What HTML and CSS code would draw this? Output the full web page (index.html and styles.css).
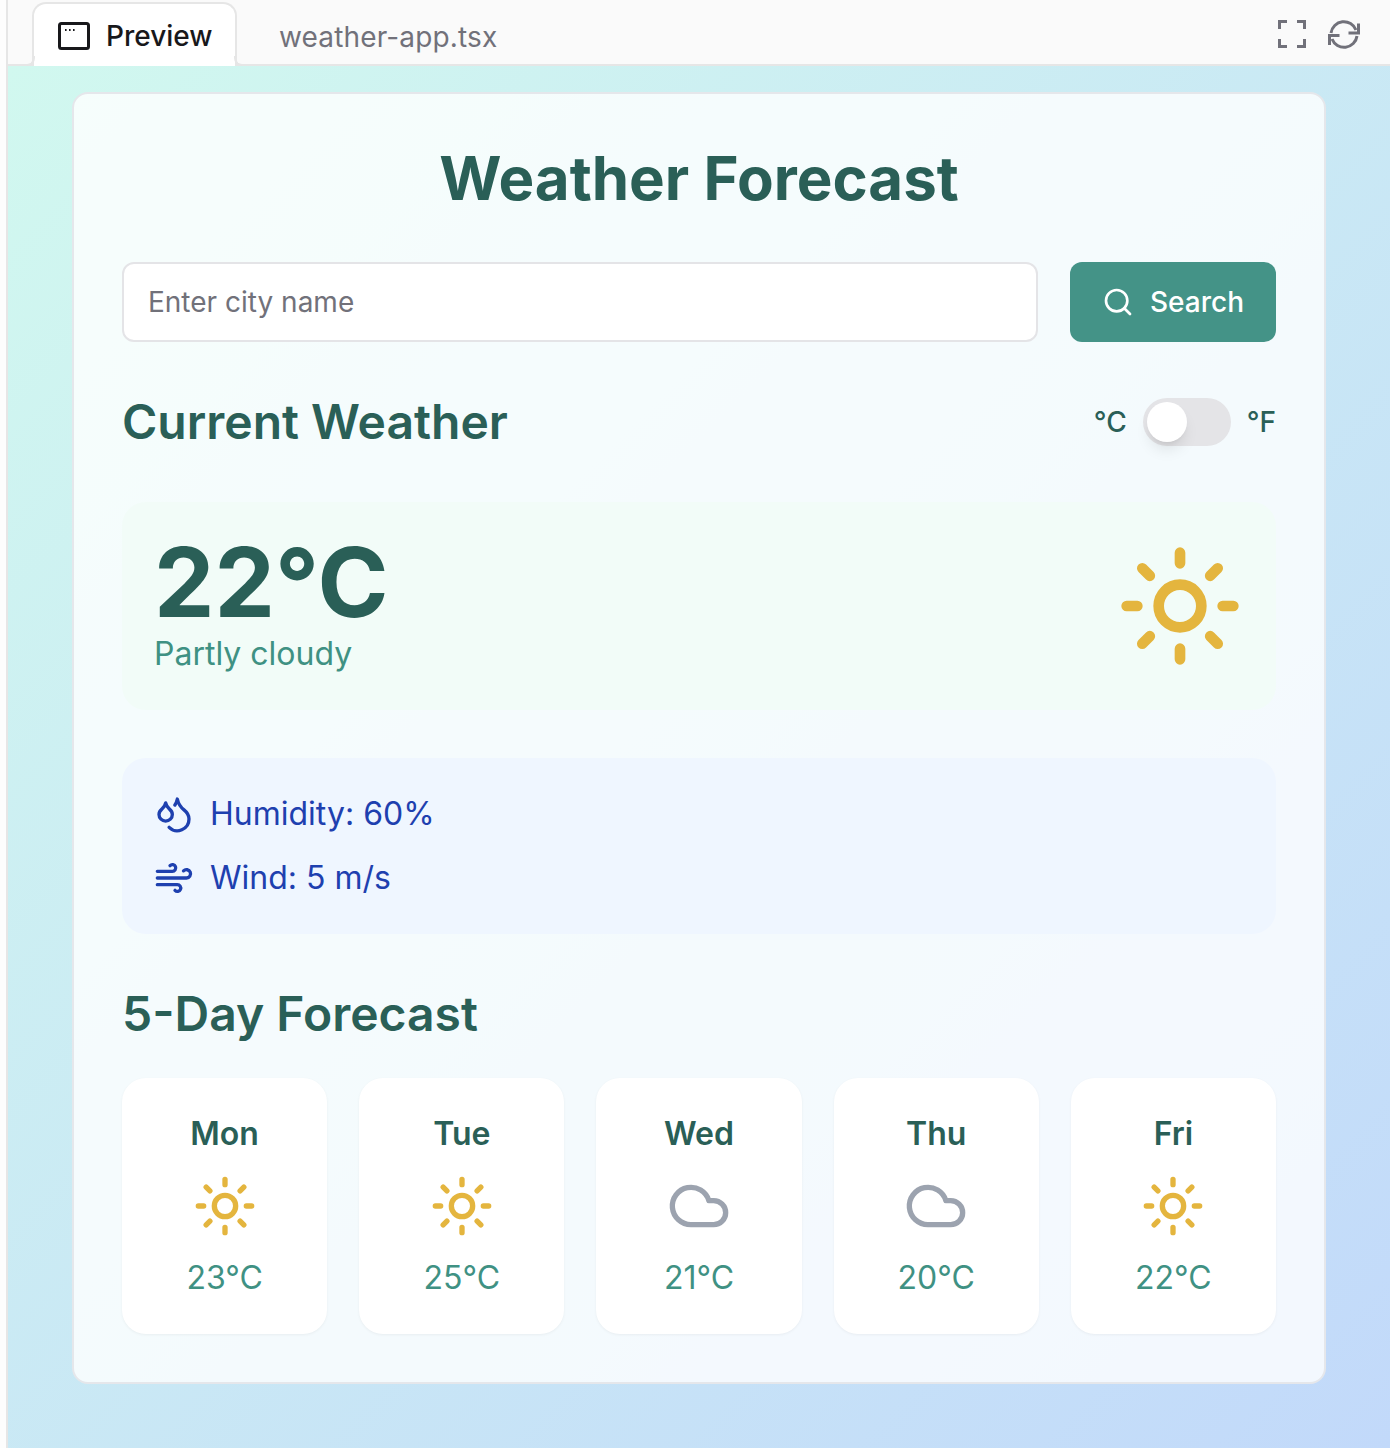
FILE: index.html
```html
<!DOCTYPE html>
<html lang="en">
<head>
    <meta charset="UTF-8">
    <meta name="viewport" content="width=device-width, initial-scale=1.0">
    <title>Weather Forecast</title>
    <link rel="stylesheet" href="styles.css">
</head>
<body>

<div class="topbar">
    <div class="tab tab-active">
        <svg class="tab-icon" viewBox="0 0 32 28" fill="none" stroke="currentColor" stroke-width="3">
            <rect x="1.5" y="1.5" width="29" height="25" rx="2"/>
            <path d="M7 8h1.6M11 8h1.6M15 8h1.6" stroke-width="2"/>
        </svg>
        <span>Preview</span>
    </div>
    <div class="tab">weather-app.tsx</div>
    <div class="tools">
        <svg class="tool-expand" viewBox="0 0 28 28" fill="none" stroke="currentColor" stroke-width="3">
            <path d="M1.5 9V1.5H9M19 1.5h7.5V9M26.5 19v7.5H19M9 26.5H1.5V19"/>
        </svg>
        <svg class="tool-refresh" viewBox="0 0 32 32" fill="none" stroke="currentColor" stroke-width="3">
            <path d="M3 15A13 13 0 0 1 28 12"/>
            <path d="M30.5 5.5v9.500h-10"/>
            <path d="M29 18A13 13 0 0 1 4 21"/>
            <path d="M1.500 27v-9.500h10"/>
        </svg>
    </div>
</div>

<main class="stage">
    <section class="card">
        <h1>Weather Forecast</h1>

        <div class="search-row">
            <input class="city-input" type="text" placeholder="Enter city name">
            <button class="search-btn">
                <svg viewBox="0 0 24 24" fill="none" stroke="currentColor" stroke-width="2" stroke-linecap="round" stroke-linejoin="round">
                    <circle cx="11" cy="11" r="8"/>
                    <path d="m21 21-4.300-4.300"/>
                </svg>
                Search
            </button>
        </div>

        <div class="current-head">
            <h2>Current Weather</h2>
            <div class="unit-toggle">
                <span>°C</span>
                <div class="switch"><div class="knob"></div></div>
                <span>°F</span>
            </div>
        </div>

        <div class="current-panel">
            <div>
                <div class="temp">22°C</div>
                <div class="condition">Partly cloudy</div>
            </div>
            <svg class="sun sun-large" viewBox="0 0 24 24" fill="none" stroke="currentColor" stroke-width="2" stroke-linecap="round" stroke-linejoin="round">
                <circle cx="12" cy="12" r="4"/>
                <path d="M12 2v2M12 20v2m-7.070-17.070 1.410 1.410m11.320 11.320 1.410 1.410M2 12h2m16 0h2M6.340 17.660l-1.410 1.410M19.070 4.930l-1.410 1.410"/>
            </svg>
        </div>

        <div class="details-panel">
            <div class="detail">
                <svg viewBox="0 0 24 24" fill="none" stroke="currentColor" stroke-width="2" stroke-linecap="round" stroke-linejoin="round">
                    <path d="M7 16.300c2.200 0 4-1.830 4-4.050 0-1.160-.570-2.260-1.710-3.190S7.290 6.750 7 5.300c-.290 1.450-1.140 2.840-2.290 3.760S3 11.100 3 12.250c0 2.220 1.800 4.050 4 4.050z"/>
                    <path d="M12.560 6.600A10.970 10.970 0 0 0 14 3.020c.5 2.500 2 4.900 4 6.500s3 3.500 3 5.500a6.980 6.980 0 0 1-11.910 4.970"/>
                </svg>
                <span>Humidity: 60%</span>
            </div>
            <div class="detail">
                <svg viewBox="0 0 24 24" fill="none" stroke="currentColor" stroke-width="2" stroke-linecap="round" stroke-linejoin="round">
                    <path d="M17.700 7.700a2.500 2.500 0 1 1 1.800 4.300H2"/>
                    <path d="M9.600 4.600A2 2 0 1 1 11 8H2"/>
                    <path d="M12.600 19.400A2 2 0 1 0 14 16H2"/>
                </svg>
                <span>Wind: 5 m/s</span>
            </div>
        </div>

        <h2 class="forecast-title">5-Day Forecast</h2>

        <div class="forecast-grid">
            <div class="day">
                <div class="day-name">Mon</div>
                <svg class="sun" viewBox="0 0 24 24" fill="none" stroke="currentColor" stroke-width="2" stroke-linecap="round" stroke-linejoin="round">
                    <circle cx="12" cy="12" r="4"/>
                    <path d="M12 2v2M12 20v2m-7.070-17.070 1.410 1.410m11.320 11.320 1.410 1.410M2 12h2m16 0h2M6.340 17.660l-1.410 1.410M19.070 4.930l-1.410 1.410"/>
                </svg>
                <div class="day-temp">23°C</div>
            </div>
            <div class="day">
                <div class="day-name">Tue</div>
                <svg class="sun" viewBox="0 0 24 24" fill="none" stroke="currentColor" stroke-width="2" stroke-linecap="round" stroke-linejoin="round">
                    <circle cx="12" cy="12" r="4"/>
                    <path d="M12 2v2M12 20v2m-7.070-17.070 1.410 1.410m11.320 11.320 1.410 1.410M2 12h2m16 0h2M6.340 17.660l-1.410 1.410M19.070 4.930l-1.410 1.410"/>
                </svg>
                <div class="day-temp">25°C</div>
            </div>
            <div class="day">
                <div class="day-name">Wed</div>
                <svg class="cloud" viewBox="0 0 24 24" fill="none" stroke="currentColor" stroke-width="2" stroke-linecap="round" stroke-linejoin="round">
                    <path d="M17.500 19H9a7 7 0 1 1 6.710-9h1.790a4.500 4.500 0 1 1 0 9Z"/>
                </svg>
                <div class="day-temp">21°C</div>
            </div>
            <div class="day">
                <div class="day-name">Thu</div>
                <svg class="cloud" viewBox="0 0 24 24" fill="none" stroke="currentColor" stroke-width="2" stroke-linecap="round" stroke-linejoin="round">
                    <path d="M17.500 19H9a7 7 0 1 1 6.710-9h1.790a4.500 4.500 0 1 1 0 9Z"/>
                </svg>
                <div class="day-temp">20°C</div>
            </div>
            <div class="day">
                <div class="day-name">Fri</div>
                <svg class="sun" viewBox="0 0 24 24" fill="none" stroke="currentColor" stroke-width="2" stroke-linecap="round" stroke-linejoin="round">
                    <circle cx="12" cy="12" r="4"/>
                    <path d="M12 2v2M12 20v2m-7.070-17.070 1.410 1.410m11.320 11.320 1.410 1.410M2 12h2m16 0h2M6.340 17.660l-1.410 1.410M19.070 4.930l-1.410 1.410"/>
                </svg>
                <div class="day-temp">22°C</div>
            </div>
        </div>
    </section>
</main>

</body>
</html>
```

FILE: styles.css
```css
* {
    box-sizing: border-box;
}

body {
    margin: 0;
    height: 1448px;
    overflow: hidden;
    font-family: Inter, "Liberation Sans", sans-serif;
    background-color: #fdfdfd;
    padding-left: 6px;
    color: #2a5f57;
}

.topbar {
    display: flex;
    align-items: flex-end;
    height: 66px;
    padding-left: 24px;
    background-color: #fafafa;
    border-left: 2px solid #e6e6e6;
    border-bottom: 2px solid #e6e6e6;
}

.tab {
    display: flex;
    align-items: center;
    height: 64px;
    font-size: 28px;
    letter-spacing: 0.15px;
    color: #71717a;
    padding: 6px 42px 0 42px;
    margin-bottom: -2px;
}

.tab-active {
    position: relative;
    width: 205px;
    height: 64px;
    padding: 2px 0 0 24px;
    gap: 16px;
    letter-spacing: 0;
    color: #18181b;
    font-weight: 500;
    background-color: #fff;
    border: 2px solid #e6e6e6;
    border-bottom: none;
    border-radius: 14px 14px 0 0;
}

/* little flares where the tab meets the bar line */
.tab-active::before,
.tab-active::after {
    content: "";
    position: absolute;
    bottom: 0;
    width: 8px;
    height: 8px;
    border-bottom: 2px solid #e6e6e6;
}

.tab-active::before {
    left: -9px;
    border-right: 2px solid #e6e6e6;
    border-bottom-right-radius: 8px;
}

.tab-active::after {
    right: -9px;
    border-left: 2px solid #e6e6e6;
    border-bottom-left-radius: 8px;
}

.tab-icon {
    width: 32px;
    height: 28px;
}

.tools {
    display: flex;
    align-items: center;
    gap: 22px;
    margin-left: auto;
    margin-right: 30px;
    height: 64px;
    padding-top: 4px;
    color: #71717a;
}

.tool-expand {
    width: 28px;
    height: 28px;
}

.tool-refresh {
    width: 32px;
    height: 32px;
}

.stage {
    height: 1382px;
    padding: 26px 64px 0 64px;
    border-left: 2px solid #e6e6e6;
    background: linear-gradient(135deg, #d1f8ef 0%, #c2d9fa 100%);
}

.card {
    height: 1292px;
    padding: 48px;
    background-color: rgba(255, 255, 255, 0.8);
    border: 2px solid #e5e7eb;
    border-radius: 16px;
}

h1 {
    margin: 0 0 48px 0;
    font-size: 60px;
    line-height: 72px;
    font-weight: 700;
    text-align: center;
}

h2 {
    margin: 0;
    font-size: 48px;
    line-height: 48px;
    font-weight: 600;
}

.search-row {
    display: flex;
    gap: 32px;
    margin-bottom: 56px;
}

.city-input {
    flex: 1;
    height: 80px;
    padding: 0 24px;
    font-family: inherit;
    font-size: 28px;
    color: #18181b;
    background-color: #fff;
    border: 2px solid #e4e4e7;
    border-radius: 12px;
}

.city-input::placeholder {
    color: #71717a;
}

.search-btn {
    display: flex;
    align-items: center;
    justify-content: center;
    gap: 16px;
    width: 206px;
    height: 80px;
    font-family: inherit;
    font-size: 28px;
    font-weight: 500;
    color: #fff;
    background-color: #449387;
    border: none;
    border-radius: 12px;
}

.search-btn svg {
    width: 32px;
    height: 32px;
}

.current-head {
    display: flex;
    align-items: center;
    justify-content: space-between;
    height: 48px;
    margin-bottom: 56px;
}

.unit-toggle {
    display: flex;
    align-items: center;
    gap: 16px;
    font-size: 28px;
    font-weight: 500;
}

.switch {
    width: 88px;
    height: 48px;
    padding: 4px;
    background-color: #e4e4e7;
    border-radius: 24px;
}

.knob {
    width: 40px;
    height: 40px;
    background-color: #fff;
    border-radius: 50%;
    box-shadow: 0 10px 15px -3px rgba(0, 0, 0, 0.1), 0 4px 6px -4px rgba(0, 0, 0, 0.1);
}

.current-panel {
    display: flex;
    align-items: center;
    justify-content: space-between;
    height: 208px;
    padding: 32px;
    margin-bottom: 48px;
    background-color: #f2fcf8;
    border-radius: 24px;
}

.temp {
    font-size: 96px;
    line-height: 96px;
    font-weight: 700;
}

.condition {
    font-size: 32px;
    line-height: 48px;
    color: #3f9183;
}

.sun {
    width: 64px;
    height: 64px;
    color: #e4b53e;
}

.sun-large {
    width: 128px;
    height: 128px;
}

.details-panel {
    display: flex;
    flex-direction: column;
    gap: 16px;
    padding: 32px;
    margin-bottom: 56px;
    background-color: #eff6ff;
    border-radius: 24px;
}

.detail {
    display: flex;
    align-items: center;
    gap: 16px;
    height: 48px;
    font-size: 32px;
    color: #1e40af;
}

.detail span {
    padding-bottom: 2px;
}

.detail svg {
    width: 40px;
    height: 40px;
}

.forecast-title {
    margin-bottom: 40px;
}

.forecast-grid {
    display: grid;
    grid-template-columns: repeat(5, 1fr);
    gap: 32px;
}

.day {
    display: flex;
    flex-direction: column;
    align-items: center;
    height: 256px;
    padding: 32px 0;
    background-color: #fff;
    border-radius: 24px;
    box-shadow: 0 1px 3px rgba(0, 0, 0, 0.05);
}

.day-name {
    font-size: 32px;
    line-height: 48px;
    font-weight: 600;
    margin-bottom: 16px;
}

.day-temp {
    font-size: 32px;
    line-height: 48px;
    margin-top: 16px;
    color: #3f9183;
}

.cloud {
    width: 64px;
    height: 64px;
    color: #9ca3af;
}
```
